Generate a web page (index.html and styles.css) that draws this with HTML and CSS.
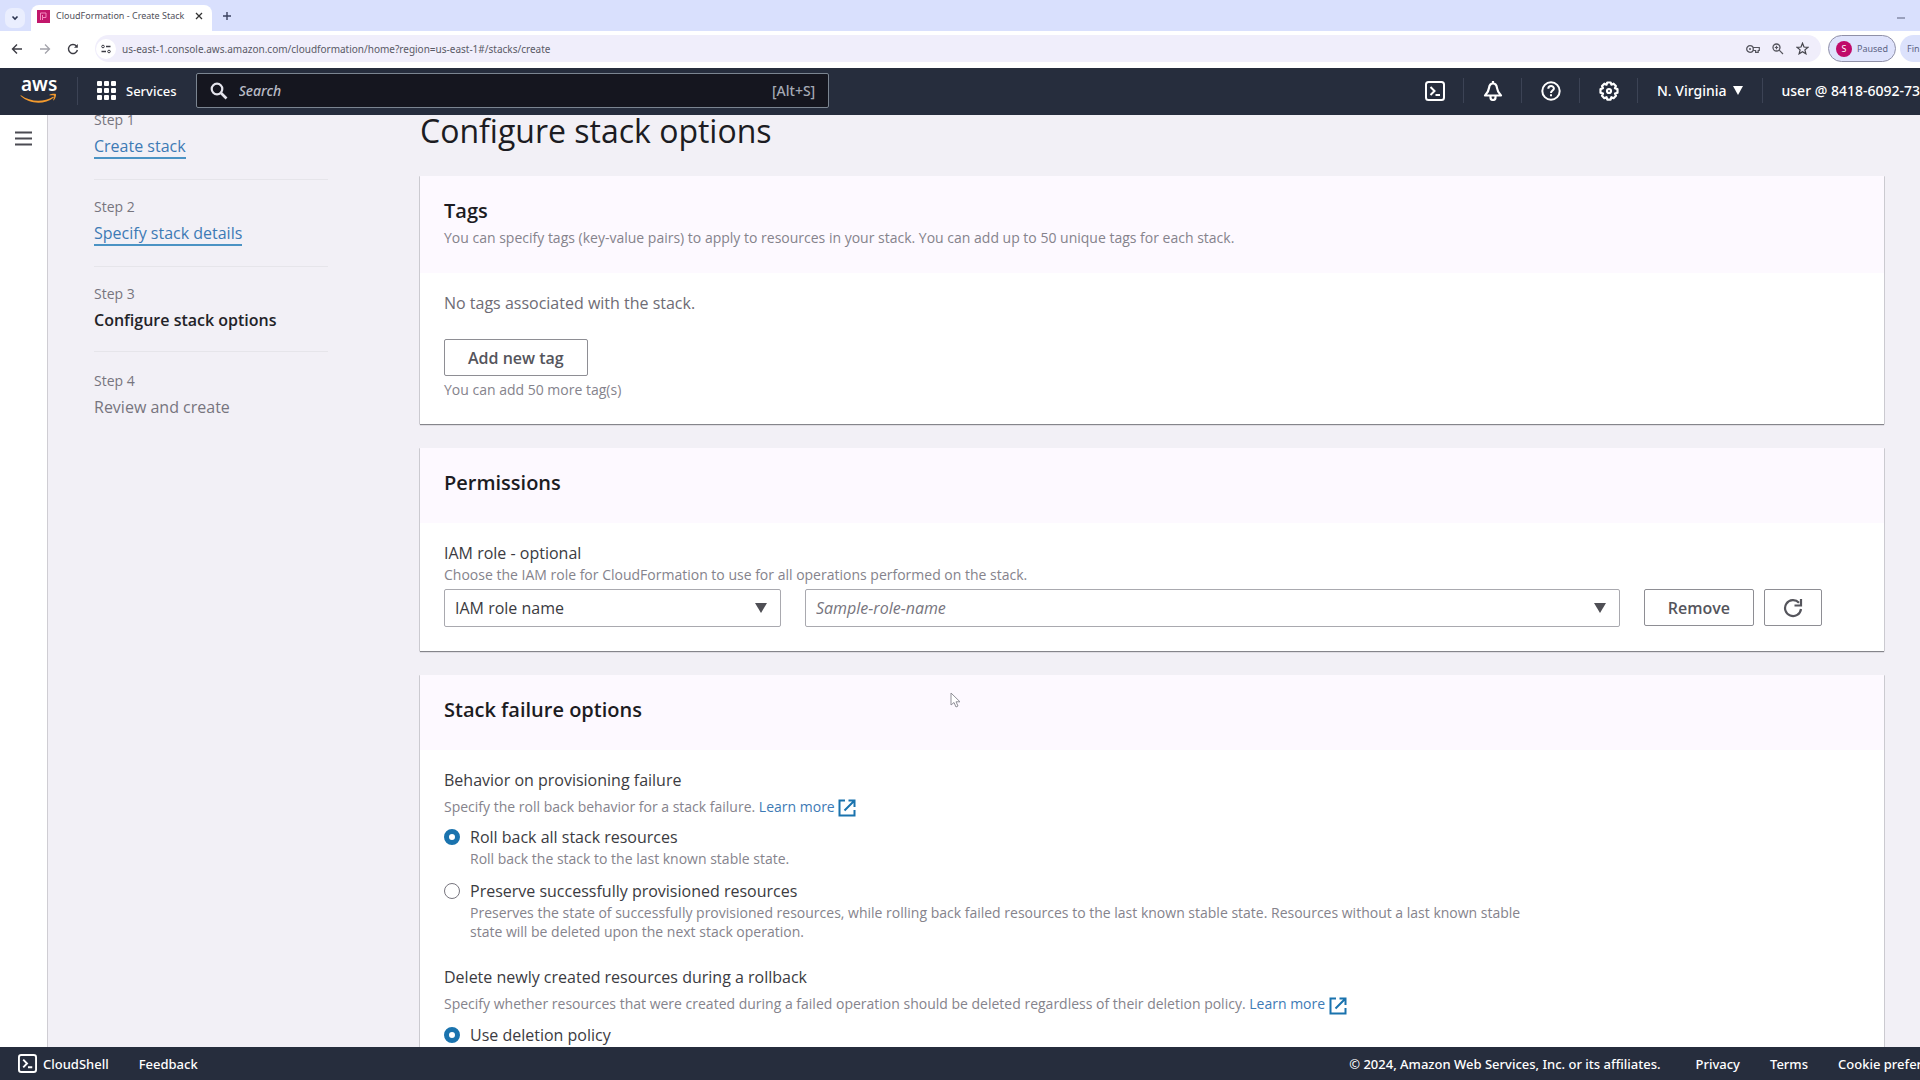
FILE: index.html
```html
<!DOCTYPE html>
<html lang="en">
<head>
  <meta charset="UTF-8">
  <meta name="viewport" content="width=device-width, initial-scale=1.0">
  <title>CloudFormation - Create Stack</title>
  <link rel="stylesheet" href="styles.css">
</head>
<body>

  <!-- Browser tabs -->
  <div class="tab-strip">
    <button class="tab-search" aria-label="Search tabs">
      <svg width="8" height="8" viewBox="0 0 8 8"><path d="M1.5 2.5 4 5l2.500-2.500" fill="none" stroke="#2c3550" stroke-width="1.600"/></svg>
    </button>
    <div class="tab">
      <svg class="favicon" width="13" height="13" viewBox="0 0 13 13">
        <rect width="13" height="13" fill="#c2176b"/>
        <path d="M3.500 10V3h5.500v4.500H5.500V5M5.500 7.500V10" fill="none" stroke="#f58ac0" stroke-width="1"/>
      </svg>
      <span class="tab-title">CloudFormation - Create Stack</span>
      <button class="icon-btn" aria-label="Close tab">
        <svg width="8" height="8" viewBox="0 0 8 8"><path d="M1 1l6 6M7 1 1 7" stroke="#333" stroke-width="1.300"/></svg>
      </button>
    </div>
    <button class="icon-btn new-tab" aria-label="New tab">
      <svg width="10" height="10" viewBox="0 0 10 10"><path d="M5 1v8M1 5h8" stroke="#3b4260" stroke-width="1.400"/></svg>
    </button>
    <button class="icon-btn minimize" aria-label="Minimize">
      <svg width="8" height="8" viewBox="0 0 8 8"><path d="M0 4h8" stroke="#5a617d" stroke-width="1"/></svg>
    </button>
  </div>

  <!-- Address bar -->
  <div class="toolbar">
    <button class="icon-btn" aria-label="Back">
      <svg width="12" height="12" viewBox="0 0 12 12"><path d="M11 6H2M6 1.500 1.500 6 6 10.500" fill="none" stroke="#3c3c44" stroke-width="1.400"/></svg>
    </button>
    <button class="icon-btn" aria-label="Forward">
      <svg width="12" height="12" viewBox="0 0 12 12"><path d="M1 6h9M6 1.500 10.500 6 6 10.500" fill="none" stroke="#a3a3ab" stroke-width="1.300"/></svg>
    </button>
    <button class="icon-btn" aria-label="Reload">
      <svg width="12" height="12" viewBox="0 0 12 12"><path d="M10.400 7A4.500 4.500 0 1 1 9.500 3.100" fill="none" stroke="#3c3c44" stroke-width="1.400"/><path d="M10.800 1v3.800H7z" fill="#3c3c44"/></svg>
    </button>
    <div class="omnibox">
      <span class="site-info">
        <svg width="10" height="10" viewBox="0 0 10 10"><path d="M5 2.500h4.500M.5 7.500H5" stroke="#3c3c44" stroke-width="1.300"/><circle cx="2" cy="2.500" r="1.300" fill="none" stroke="#3c3c44"/><circle cx="8" cy="7.500" r="1.300" fill="none" stroke="#3c3c44"/></svg>
      </span>
      <input class="url" type="text" aria-label="Address" value="us-east-1.console.aws.amazon.com/cloudformation/home?region=us-east-1#/stacks/create">
      <svg width="14" height="10" viewBox="0 0 14 10"><circle cx="4" cy="5" r="3.300" fill="none" stroke="#55555e" stroke-width="1.300"/><circle cx="4" cy="5" r="1" fill="#55555e"/><path d="M7 3.500h6.300v3h-1.100v1.800H9.600V6.500H7" fill="none" stroke="#55555e" stroke-width="1.200"/></svg>
      <svg width="12" height="12" viewBox="0 0 12 12"><circle cx="4.500" cy="4.500" r="3.500" fill="none" stroke="#55555e" stroke-width="1.300"/><path d="M7.200 7.200 11 11M2.800 4.500h3.400M4.500 2.800v3.400" stroke="#55555e" stroke-width="1.200"/></svg>
      <svg width="13" height="13" viewBox="0 0 13 13"><path d="M6.500 1.200 8 5l4 .3-3.100 2.600 1 3.900-3.400-2.100-3.400 2.100 1-3.900L1 5.300 5 5z" fill="none" stroke="#44444c" stroke-width="1.200"/></svg>
    </div>
    <button class="profile"><span class="avatar">S</span>Paused</button>
    <button class="update">Fin</button>
  </div>

  <!-- AWS navigation -->
  <header class="aws-nav">
    <a class="logo" href="#" aria-label="AWS home">
      <svg width="38" height="28" viewBox="0 0 38 28">
        <text class="logo-text" x="1" y="14">aws</text>
        <path d="M1 18.200c9 6.800 23 7.200 32 1.500.8-.3 1.200.5.500 1-9 7.200-24 6.500-32.800-1.700-.4-.5-.1-1 .3-.8z" fill="#f29a2e"/>
        <path d="M29.500 17.700c2-1.200 5.500-1.300 6.300-.7.600.8-.2 4.600-2 6.300-.5.300-.7.100-.6-.3.600-1.400 1.400-3.700.9-4.300-.6-.7-2.800-.5-4.300-.4-.5 0-.6-.3-.3-.6z" fill="#f29a2e"/>
      </svg>
    </a>
    <button class="services">
      <svg width="20" height="20" viewBox="0 0 20 20" fill="#fff">
        <rect x="0" y="0" width="5" height="5" rx="1"/><rect x="7" y="0" width="5" height="5" rx="1"/><rect x="14" y="0" width="5" height="5" rx="1"/>
        <rect x="0" y="7" width="5" height="5" rx="1"/><rect x="7" y="7" width="5" height="5" rx="1"/><rect x="14" y="7" width="5" height="5" rx="1"/>
        <rect x="0" y="14" width="5" height="5" rx="1"/><rect x="7" y="14" width="5" height="5" rx="1"/><rect x="14" y="14" width="5" height="5" rx="1"/>
      </svg>
      Services
    </button>
    <label class="search">
      <svg width="18" height="18" viewBox="0 0 18 18"><circle cx="7" cy="7" r="5.300" fill="none" stroke="#e4e4ec" stroke-width="2.200"/><path d="M11 11l5.500 5.500" stroke="#e4e4ec" stroke-width="2.600"/></svg>
      <input type="text" placeholder="Search" aria-label="Search">
      <span>[Alt+S]</span>
    </label>
    <div class="nav-right">
      <button class="nav-icon" aria-label="CloudShell">
        <svg width="20" height="20" viewBox="0 0 20 20" fill="none" stroke="#fff" stroke-width="2"><rect x="1" y="1" width="18" height="18" rx="2.500"/><path d="M5.500 6l4 4-4 4M10.500 14H15"/></svg>
      </button>
      <button class="nav-icon" aria-label="Notifications">
        <svg width="20" height="20" viewBox="0 0 20 20" fill="none" stroke="#fff" stroke-width="2.200" stroke-linejoin="round"><path d="M10 2.500c-2.500 0-3.700 2-4 4.500-.3 3-1.500 5-4 7.500h16c-2.500-2.500-3.700-4.500-4-7.500-.3-2.500-1.500-4.500-4-4.500zM10 0v2.500"/><path d="M7.500 15v1.500a2.500 2.500 0 0 0 5 0V15"/></svg>
      </button>
      <button class="nav-icon" aria-label="Help">
        <svg width="20" height="20" viewBox="0 0 20 20" fill="none" stroke="#fff" stroke-width="2"><circle cx="10" cy="10" r="8.700"/><path d="M7.300 7.800c0-3.700 5.600-3.500 5.600-.3 0 2-2.900 2.200-2.900 4.500M10 13.200v2.100"/></svg>
      </button>
      <button class="nav-icon" aria-label="Settings">
        <svg width="20" height="20" viewBox="0 0 20 20" fill="none" stroke="#fff" stroke-width="2.200" stroke-linejoin="round"><path d="M8.300 1.500h3.400l.7 2.200 2.200-1 2.300 2.300-1 2.200 2.600.9v3.600l-2.500.9 1 2.200-2.400 2.400-2.200-1-.8 2.400H8.300l-.8-2.400-2.200 1L3 14.800l1-2.200-2.500-.9V8.100l2.500-.9L3 5l2.300-2.300 2.200 1z"/><circle cx="10" cy="10" r="2"/></svg>
      </button>
      <button class="nav-item">N. Virginia <svg width="10" height="9" viewBox="0 0 10 9"><path d="M0 0h10L5 9z" fill="#fff"/></svg></button>
      <button class="nav-item user">user @ 8418-6092-73</button>
    </div>
  </header>

  <main>
    <div class="rail">
      <button class="icon-btn" aria-label="Open side navigation">
        <svg width="17" height="15" viewBox="0 0 17 15"><path d="M0 1.500h17M0 7.500h17M0 13.500h17" stroke="#4b4b52" stroke-width="2"/></svg>
      </button>
    </div>

    <div class="viewport">
      <div class="content">
        <nav class="steps">
          <div class="step"><small>Step 1</small><a href="#">Create stack</a></div>
          <div class="step"><small>Step 2</small><a href="#">Specify stack details</a></div>
          <div class="step"><small>Step 3</small><b>Configure stack options</b></div>
          <div class="step"><small>Step 4</small><span>Review and create</span></div>
        </nav>

        <div class="panels">
          <h1>Configure stack options</h1>

          <section class="card">
            <div class="card-header">
              <h2>Tags</h2>
              <p class="hint">You can specify tags (key-value pairs) to apply to resources in your stack. You can add up to 50 unique tags for each stack.</p>
            </div>
            <div class="card-body">
              <p class="empty">No tags associated with the stack.</p>
              <button class="btn">Add new tag</button>
              <p class="hint">You can add 50 more tag(s)</p>
            </div>
          </section>

          <section class="card">
            <div class="card-header"><h2>Permissions</h2></div>
            <div class="card-body">
              <label class="label" for="role-type">IAM role - optional</label>
              <p class="hint">Choose the IAM role for CloudFormation to use for all operations performed on the stack.</p>
              <div class="role-row">
                <select id="role-type"><option>IAM role name</option></select>
                <select class="placeholder" aria-label="IAM role"><option>Sample-role-name</option></select>
                <div class="actions">
                  <button class="btn">Remove</button>
                  <button class="btn" aria-label="Refresh">
                    <svg width="20" height="20" viewBox="0 0 20 20"><path d="M18 11A8 8 0 1 1 16 4.700" fill="none" stroke="#55555c" stroke-width="2.200"/><path d="M18 1v6.500h-6.500" fill="none" stroke="#55555c" stroke-width="2.200"/></svg>
                  </button>
                </div>
              </div>
            </div>
          </section>

          <section class="card">
            <div class="card-header"><h2>Stack failure options</h2></div>
            <div class="card-body">
              <fieldset>
                <legend class="label">Behavior on provisioning failure</legend>
                <p class="hint">Specify the roll back behavior for a stack failure. <a href="#">Learn more
                  <svg width="18" height="18" viewBox="0 0 18 18" fill="none" stroke="#1a73ae" stroke-width="2"><path d="M7 1.500H1.500v15h15V11M10.500 1.500h6V8M16 2 6.500 11.500"/></svg></a></p>
                <label class="option">
                  <input type="radio" name="failure" checked>
                  <span>Roll back all stack resources</span>
                  <span class="hint">Roll back the stack to the last known stable state.</span>
                </label>
                <label class="option">
                  <input type="radio" name="failure">
                  <span>Preserve successfully provisioned resources</span>
                  <span class="hint">Preserves the state of successfully provisioned resources, while rolling back failed resources to the last known stable state. Resources without a last known stable state will be deleted upon the next stack operation.</span>
                </label>
              </fieldset>
              <fieldset>
                <legend class="label">Delete newly created resources during a rollback</legend>
                <p class="hint">Specify whether resources that were created during a failed operation should be deleted regardless of their deletion policy. <a href="#">Learn more
                  <svg width="18" height="18" viewBox="0 0 18 18" fill="none" stroke="#1a73ae" stroke-width="2"><path d="M7 1.500H1.500v15h15V11M10.500 1.500h6V8M16 2 6.500 11.500"/></svg></a></p>
                <label class="option">
                  <input type="radio" name="deletion" checked>
                  <span>Use deletion policy</span>
                </label>
              </fieldset>
            </div>
          </section>
        </div>
      </div>
    </div>
  </main>

  <footer>
    <a href="#">
      <svg width="19" height="19" viewBox="0 0 20 20" fill="none" stroke="#fff" stroke-width="2"><rect x="1" y="1" width="18" height="18" rx="2.500"/><path d="M5.500 6l4 4-4 4M10.500 14H15"/></svg>
      CloudShell
    </a>
    <a href="#">Feedback</a>
    <span class="copyright">© 2024, Amazon Web Services, Inc. or its affiliates.</span>
    <a href="#">Privacy</a>
    <a href="#">Terms</a>
    <a class="cookies" href="#">Cookie preferences</a>
  </footer>

  <!-- Mouse pointer -->
  <svg class="pointer" width="11" height="16" viewBox="0 0 11 16"><path d="M1 1v12l3-2.500 2 4.500 2-1-2-4.200h4z" fill="#fff" stroke="#8f8f97" stroke-width="1"/></svg>

</body>
</html>
```

FILE: styles.css
```css
* {
  margin: 0;
  padding: 0;
  box-sizing: border-box;
}

body {
  font-family: "Noto Sans", "Open Sans", sans-serif;
  font-size: 16px;
  line-height: 24px;
  color: #3b3b41;
  display: flex;
  flex-direction: column;
  height: 100vh;
  overflow: hidden;
}

button, input, select {
  font: inherit;
  color: inherit;
}

button {
  background: none;
  border: none;
  cursor: pointer;
}

svg {
  flex-shrink: 0;
}

a {
  color: #3d7ab5;
  text-decoration: none;
}

.icon-btn {
  display: flex;
}

/* Browser */
.tab-strip {
  display: flex;
  align-items: center;
  height: 31px;
  padding: 5px 15px 0 5px;
  background: #d9e0fd;
}

.tab-search {
  display: flex;
  align-items: center;
  justify-content: center;
  width: 20px;
  height: 20px;
  margin-right: 6px;
  border-radius: 7px;
  background: #eaeefe;
}

.tab {
  display: flex;
  align-items: center;
  width: 181px;
  height: 26px;
  padding: 0 9px 4px 6px;
  border-radius: 8px 8px 0 0;
  background: #fff;
}

.tab-title {
  flex: 1;
  margin-left: 6px;
  font-size: 9px;
  color: #50505a;
  white-space: nowrap;
}

.new-tab {
  margin-left: 10px;
  padding-bottom: 4px;
}

.minimize {
  margin-left: auto;
}

.toolbar {
  display: flex;
  align-items: center;
  height: 37px;
  padding: 0 0 2px 11px;
  gap: 16px;
  background: #fff;
}

.omnibox {
  flex: 1;
  display: flex;
  align-items: center;
  gap: 12px;
  height: 27px;
  padding: 0 12px 0 1px;
  border-radius: 14px;
  background: #f0eefb;
}

.site-info {
  display: flex;
  align-items: center;
  justify-content: center;
  width: 20px;
  height: 20px;
  border-radius: 50%;
  background: #fff;
}

.url {
  flex: 1;
  margin-left: -6px;
  border: none;
  background: none;
  font-size: 10px;
  color: #5a5a66;
}

.profile {
  display: flex;
  align-items: center;
  gap: 5px;
  width: 68px;
  height: 27px;
  margin-left: -9px;
  padding-left: 7px;
  border: 1px solid #8f90a8;
  border-radius: 14px;
  background: #dfe3fc;
  font-size: 9px;
  color: #5d6484;
}

.avatar {
  width: 16px;
  height: 16px;
  border-radius: 50%;
  background: #c00a6a;
  color: #fff;
  line-height: 16px;
  text-align: center;
}

.update {
  width: 20px;
  height: 27px;
  margin-left: -12px;
  padding-left: 7px;
  border-radius: 14px 0 0 14px;
  background: #dce2fc;
  font-size: 9px;
  color: #5d6484;
  text-align: left;
}

/* AWS navigation */
.aws-nav {
  display: flex;
  align-items: center;
  height: 47px;
  padding-bottom: 2px;
  background: #262d3d;
  color: #fff;
  font-size: 13px;
  font-weight: 500;
}

.logo {
  display: flex;
  padding: 0 19px 0 20px;
  border-right: 1px solid #3c4355;
}

.logo-text {
  font-size: 19px;
  font-weight: 600;
  fill: #fff;
}

.services {
  display: flex;
  align-items: center;
  gap: 9px;
  padding: 0 19px;
}

.search {
  display: flex;
  align-items: center;
  gap: 11px;
  width: 33%;
  height: 35px;
  padding: 0 13px;
  border: 1px solid #7b8591;
  border-radius: 2px;
  background: #15161f;
  font-size: 14px;
  color: #a5a9b4;
}

.search input {
  flex: 1;
  border: none;
  background: none;
  outline: none;
}

.search input::placeholder {
  color: #b9bcc6;
  font-style: italic;
}

.nav-right {
  display: flex;
  margin-left: auto;
}

.nav-icon,
.nav-item {
  display: flex;
  align-items: center;
  justify-content: center;
  height: 25px;
  border-right: 1px solid #3c4355;
}

.nav-icon {
  width: 58px;
}

.nav-item {
  gap: 6px;
  padding: 0 19px;
  font-size: 14px;
  white-space: nowrap;
}

.user {
  padding-right: 0;
  border-right: none;
}

/* Page */
main {
  flex: 1;
  display: flex;
  min-height: 0;
}

.rail {
  width: 48px;
  padding: 16px 15px;
  border-right: 1px solid #cfcdd3;
  background: #fff;
}

.viewport {
  flex: 1;
  overflow: hidden;
  background: #f2f0f6;
  font-family: "Open Sans", "Noto Sans", sans-serif;
}

/* the page is scrolled down a little under the navigation */
.content {
  display: grid;
  grid-template-columns: 234px 1fr;
  gap: 92px;
  margin-top: -7px;
  padding: 0 36px 0 46px;
}

.step {
  height: 87px;
  color: #77757e;
}

.step::after {
  content: "";
  display: block;
  margin-top: 20px;
  border-top: 1px solid #e6e5ea;
}

.step:last-child::after {
  display: none;
}

.step small {
  display: block;
  font-size: 14px;
  line-height: 24px;
}

.step a {
  border-bottom: 2px solid #4b93c4;
}

.step a,
.step b,
.step span {
  display: table;
  line-height: 22px;
  margin-top: 3px;
}

.step b {
  font-weight: 600;
  color: #232328;
}

h1 {
  padding-top: 1px;
  margin-bottom: 23px;
  font-size: 32px;
  font-weight: 400;
  line-height: 44px;
  color: #1c1c22;
}

.card {
  margin-bottom: 24px;
  background: #fff;
  box-shadow: 0 1px 1px #85858b, -1px 0 0 #dad9df, 1px 0 0 #dad9df;
}

.card-header {
  padding: 20px 24px 25px;
  background: #fdf9ff;
}

.card-body {
  padding: 18px 24px 24px;
}

h2 {
  font-size: 20px;
  font-weight: 600;
  line-height: 30px;
  color: #1c1c22;
}

.hint {
  font-size: 14px;
  line-height: 20px;
  color: #85838c;
}

.card-header .hint {
  margin-top: 2px;
}

.empty {
  margin-bottom: 24px;
  color: #6e6c75;
}

.btn {
  display: flex;
  align-items: center;
  justify-content: center;
  height: 37px;
  margin-bottom: 4px;
  padding: 0 23px;
  border: 1px solid #8e8e94;
  border-radius: 2px;
  background: #fff;
  font-weight: 600;
  color: #55555c;
}

.label {
  display: block;
}

.role-row {
  display: flex;
  gap: 24px;
  margin-top: 4px;
  padding-right: 38px;
}

select {
  appearance: none;
  width: 337px;
  height: 38px;
  padding: 0 10px;
  border: 1px solid #a9a9af;
  border-radius: 2px;
  background: #fff url("data:image/svg+xml,%3Csvg xmlns='http://www.w3.org/2000/svg' width='12' height='10'%3E%3Cpath d='M0 0h12L6 10z' fill='%234f4f55'/%3E%3C/svg%3E") no-repeat right 13px center;
}

.placeholder {
  flex: 1;
  font-style: italic;
  color: #77757e;
}

.actions {
  display: flex;
  gap: 10px;
}

.actions .btn {
  margin-bottom: 0;
}

.actions .btn:last-child {
  padding: 0 18px;
}

fieldset {
  border: none;
  margin-bottom: 24px;
}

fieldset > .hint {
  margin: 5px 0 8px;
}

.hint svg {
  vertical-align: middle;
}

.option {
  display: grid;
  grid-template-columns: 16px 1fr;
  column-gap: 10px;
  align-items: center;
  max-width: 1080px;
  margin-bottom: 11px;
}

.option:last-child {
  margin-bottom: 0;
}

.option .hint {
  grid-column: 2;
  line-height: 19px;
}

.option input {
  appearance: none;
  width: 16px;
  height: 16px;
  border: 1px solid #77757e;
  border-radius: 50%;
  background: #fff;
}

.option input:checked {
  border: 5px solid #1a73ae;
}

/* Footer */
footer {
  display: flex;
  align-items: center;
  height: 33px;
  padding-left: 18px;
  gap: 30px;
  background: #262d3d;
  color: #fff;
  font-size: 13px;
  font-weight: 500;
}

footer a {
  display: flex;
  align-items: center;
  gap: 6px;
  color: #fff;
}

.copyright {
  margin-left: auto;
  margin-right: 5px;
}

.cookies {
  width: 82px;
  overflow: hidden;
  white-space: nowrap;
}

.pointer {
  position: absolute;
  left: 950px;
  top: 692px;
}
```
